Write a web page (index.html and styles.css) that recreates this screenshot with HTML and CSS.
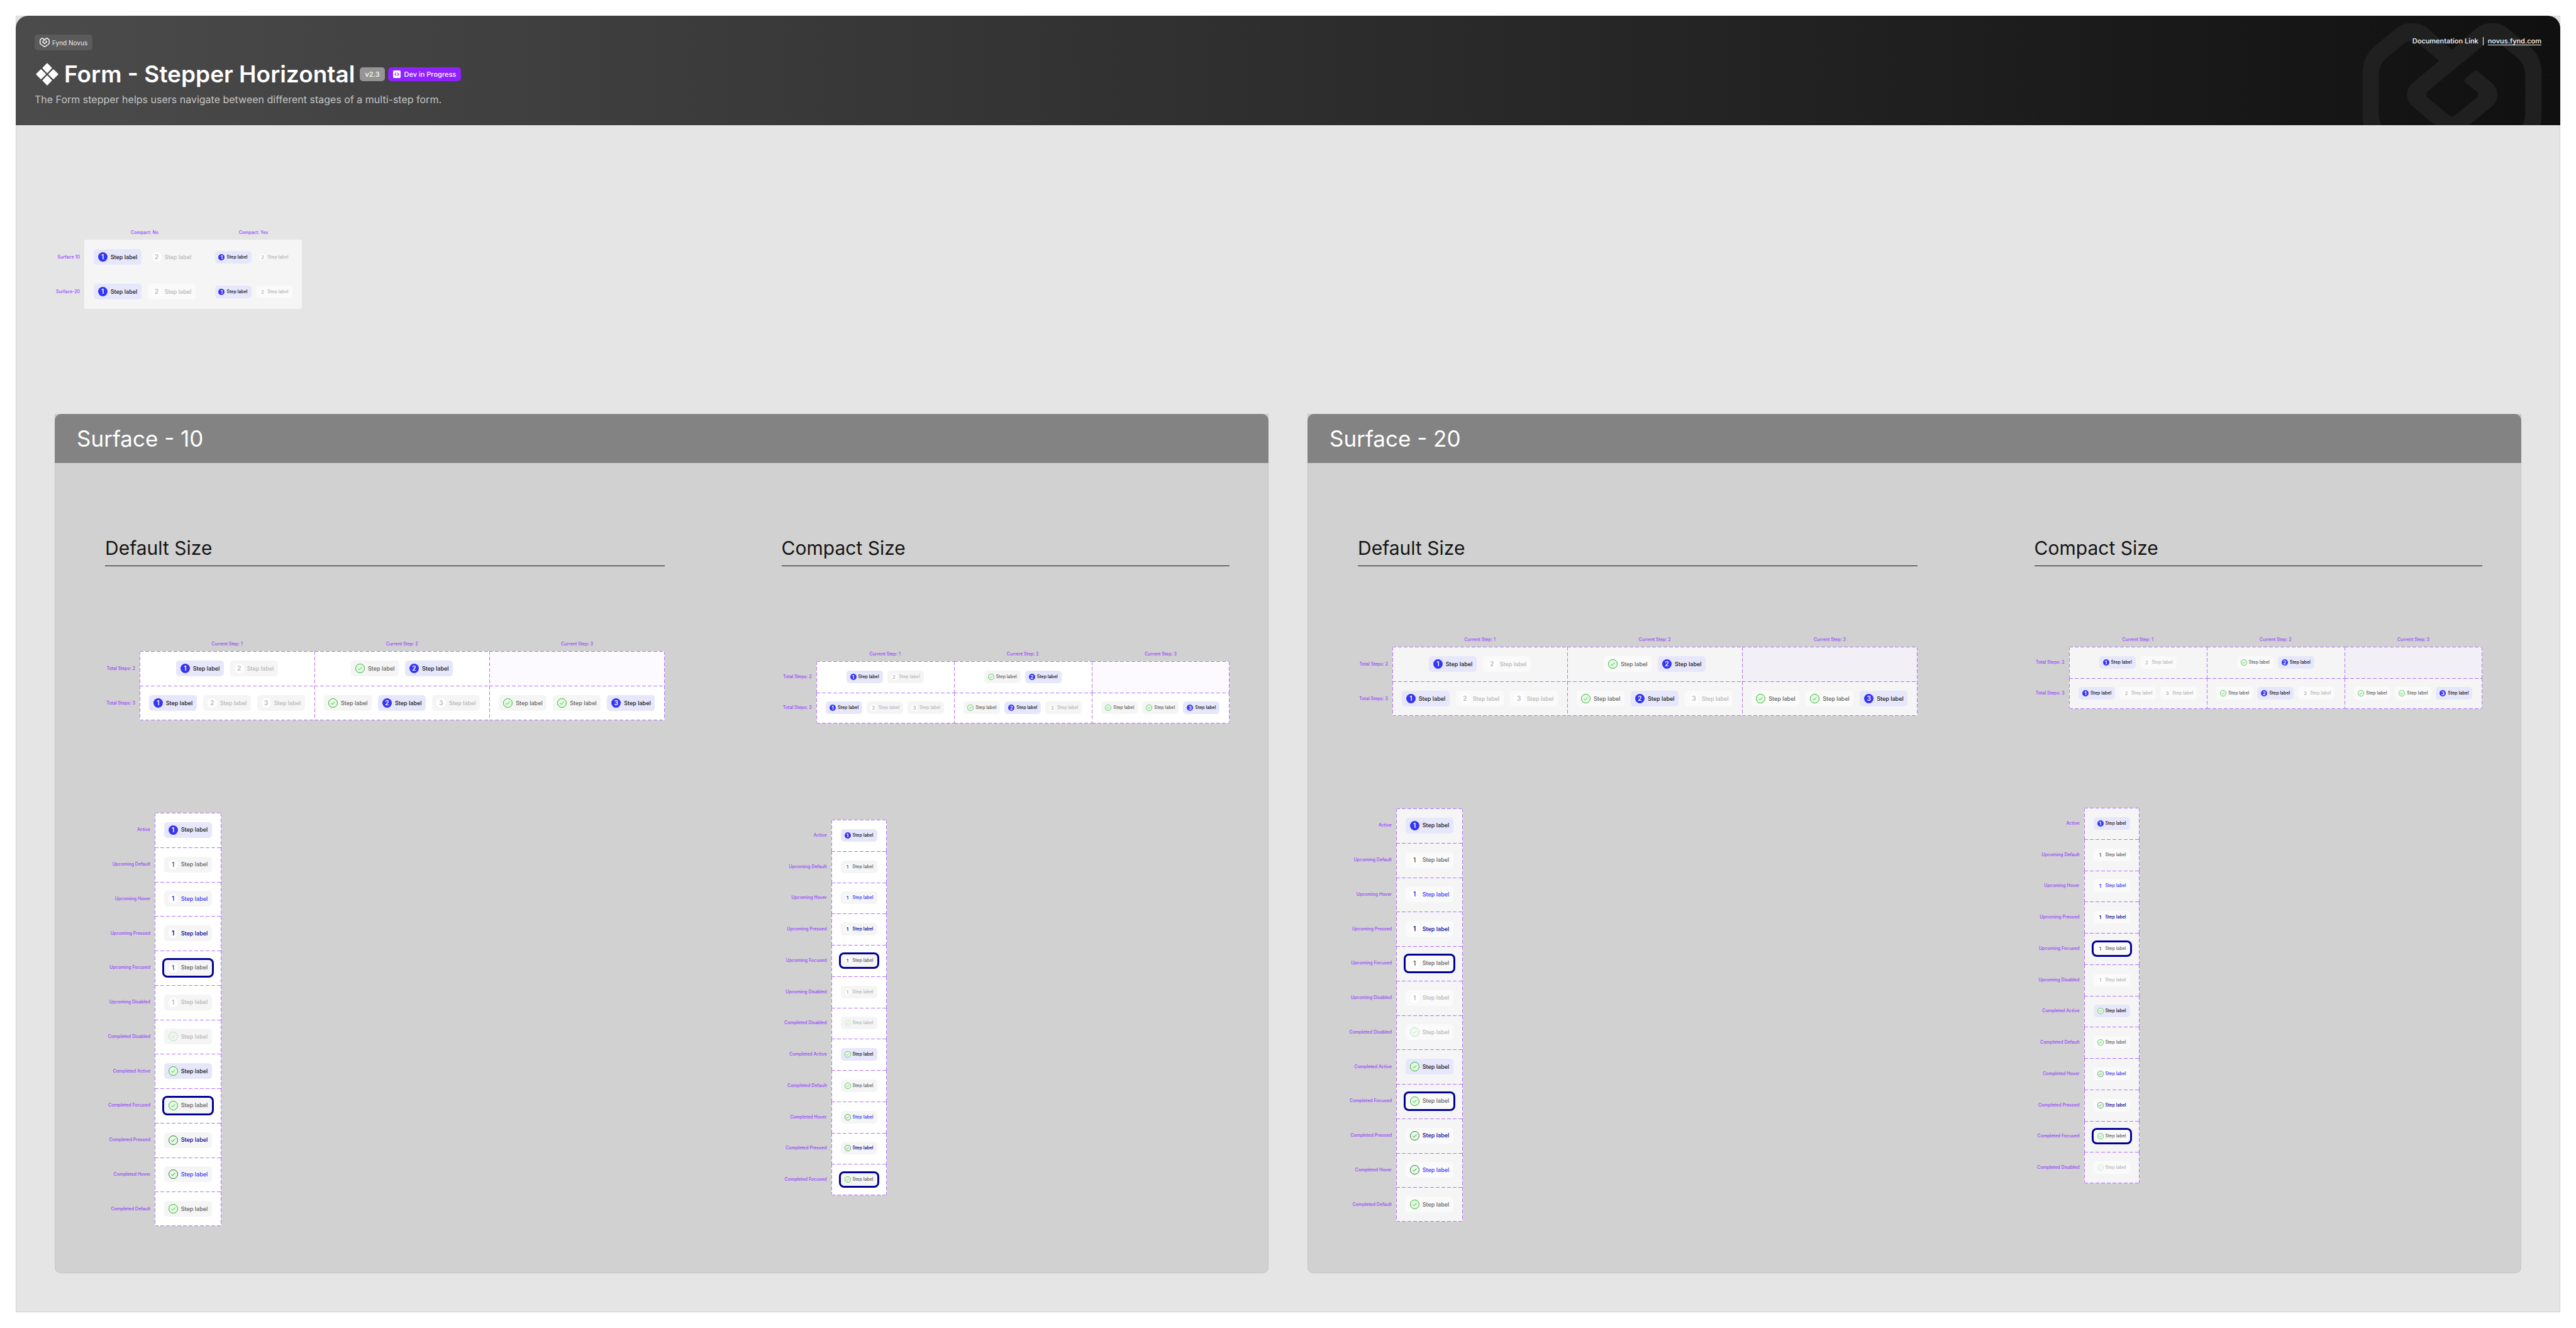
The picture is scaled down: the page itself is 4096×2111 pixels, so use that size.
FILE: index.html
```html
<!DOCTYPE html>
<html lang="en">
<head>
<meta charset="utf-8">
<title>Form - Stepper Horizontal</title>
<link rel="stylesheet" href="styles.css">
</head>
<body>
<svg class="defs" aria-hidden="true">
  <symbol id="novus" viewBox="0 0 460 430">
    <path fill-rule="evenodd" d="M1 126C1 96 14 75 33 58L88 12C110-5 145-5 167 12L230 68L293 12C315-5 350-5 371 12L427 58C446 75 459 96 459 126V231C459 275 445 292 421 312L251 421C238 431 222 431 209 421L39 312C15 292 1 275 1 231ZM42 136V231C42 258 52 274 70 287L217 382C226 388 234 388 243 382L390 287C408 274 417 258 417 231V136C417 114 410 98 394 86L354 54C338 43 324 45 311 56L167 175C163 179 163 186 167 190L224 237C228 240 232 240 236 237L293 190C297 186 297 179 293 175L263 151C260 148 260 144 263 142L287 122C290 119 292 119 294 122L333 154C350 168 350 197 333 212L250 281C237 291 223 291 210 281L128 212C110 197 110 168 128 154L197 96L144 52C134 43 118 43 107 52L68 84C50 97 42 114 42 136Z"/>
  </symbol>
  <symbol id="check" viewBox="0 0 24 24">
    <circle cx="12" cy="12" r="11.25" fill="#e4fbe5"/>
    <path d="M7 12.6l3 2.9 6.6-6.6" fill="none"/>
  </symbol>
</svg>
<div class="frame">
  <header class="masthead">
    <svg class="watermark" viewBox="0 0 460 261" preserveAspectRatio="none" aria-hidden="true">
      <path d="M3.500 261Q1 247 1 231V126C1 96 14 75 33 58L88 12C110-5 145-5 167 12L230 68L293 12C315-5 350-5 371 12L427 58C446 75 459 96 459 126V231Q459 247 456 261H410Q417 247 417 231V136C417 114 410 98 394 86L354 54C338 43 324 45 311 56L167 175C163 179 163 186 167 190L224 237C228 240 232 240 236 237L293 190C297 186 297 179 293 175L263 151C260 148 260 144 263 142L287 122C290 119 292 119 294 122L333 154C350 168 350 197 333 212L273 261H186L128 212C110 197 110 168 128 154L197 96L144 52C134 43 118 43 107 52L68 84C50 97 42 114 42 136V231Q42 247 50 261Z"/>
    </svg>
    <div class="masthead-main">
      <span class="brand"><svg class="brand-logo" aria-hidden="true"><use href="#novus"/></svg>Fynd Novus</span>
      <div class="title-row">
        <svg class="title-icon" viewBox="0 0 60 60" aria-hidden="true"><g stroke-linejoin="round" stroke-width="2"><path d="M30 3L41 14.500L30 26L19 14.500ZM30 34L41 45.500L30 57L19 45.500ZM14.500 18.500L26 30L14.500 41.500L3 30ZM45.500 18.500L57 30L45.500 41.500L34 30Z"/></g></svg>
        <h1>Form - Stepper Horizontal</h1>
        <div class="tags">
          <span class="tag">v2.3</span>
          <span class="tag tag-dev"><svg class="dev-icon" viewBox="0 0 20 20" aria-hidden="true"><rect width="20" height="20" rx="3" fill="#fff"/><path d="M8.500 6L5 10l3.500 4M11.500 6L15 10l-3.500 4" fill="none" stroke="#8f22ff" stroke-width="2"/></svg>Dev in Progress</span>
        </div>
      </div>
      <p class="subtitle">The Form stepper helps users navigate between different stages of a multi-step form.</p>
    </div>
    <div class="doc"><span>Documentation Link</span><span class="doc-line"></span><a href="#">novus.fynd.com</a></div>
  </header>
  <main>
    <div class="overview" data-overview></div>
    <div class="surfaces">
      <section class="surface s10">
        <h2>Surface - 10</h2>
        <div class="surface-body">
          <div class="size size-default"><h3>Default Size</h3><div data-matrix></div><div data-states="default-10"></div></div>
          <div class="size size-compact"><h3>Compact Size</h3><div data-matrix></div><div data-states="compact-10"></div></div>
        </div>
      </section>
      <section class="surface s20">
        <h2>Surface - 20</h2>
        <div class="surface-body">
          <div class="size size-default"><h3>Default Size</h3><div data-matrix></div><div data-states="default-20"></div></div>
          <div class="size size-compact"><h3>Compact Size</h3><div data-matrix></div><div data-states="compact-20"></div></div>
        </div>
      </section>
    </div>
  </main>
</div>
<script src="app.js"></script>
</body>
</html>
```
FILE: styles.css
```css
* { box-sizing: border-box; }
body { margin: 0; padding: 25px; background: #fff; font-family: Inter, "Liberation Sans", sans-serif; color: #141414; }
h1, h2, h3, p { margin: 0; }
.defs { position: absolute; width: 0; height: 0; }
.frame { display: flex; flex-direction: column; min-height: calc(100vh - 50px); background: #e5e5e5; box-shadow: inset 0 0 0 1px #d2d2d2; }

/* Masthead */
.masthead { position: relative; display: flex; justify-content: space-between; align-items: flex-start; height: 174px; padding: 30px; border-radius: 20px 20px 0 0; background: linear-gradient(90deg, #4b4b4b, #101010); color: #fff; overflow: hidden; }
.masthead-main { display: flex; flex-direction: column; align-items: flex-start; }
.brand { display: flex; align-items: center; gap: 4px; height: 25px; padding: 0 8px; border-radius: 5px; background: #5b5b5b; color: #ececec; font-size: 10px; }
.brand-logo { width: 16px; height: 15px; fill: #fff; }
.title-row { display: flex; align-items: center; gap: 8px; height: 44px; margin-top: 16px; }
.title-icon { width: 38px; height: 38px; margin-left: 1px; fill: #fff; stroke: #fff; }
h1 { font-size: 37px; line-height: 44px; font-weight: 600; white-space: nowrap; }
.tags { display: flex; gap: 5px; }
.tag { display: flex; align-items: center; gap: 6px; height: 22px; padding: 0 8px; border-radius: 5px; background: #959595; font-size: 11px; font-weight: 500; white-space: nowrap; }
.tag-dev { background: #8f22ff; }
.dev-icon { width: 12px; height: 12px; }
.subtitle { margin-top: 6px; font-size: 16px; line-height: 24px; color: #c4c4c4; }
.doc { position: relative; display: flex; align-items: center; gap: 7px; height: 20px; font-size: 11px; font-weight: 500; }
.doc-line { width: 1px; height: 13px; background: #fff; }
.doc a { color: #fff; text-underline-offset: 2px; }
.watermark { position: absolute; top: 12px; right: 29px; width: 286px; height: 162px; fill: #202020; }

main { display: flex; flex-direction: column; flex: 1; padding: 166px 62px 62px; }
.surfaces { display: grid; grid-template-columns: 1fr 1fr; gap: 62px; flex: 1; margin-top: 167px; }
.surface { background: #d1d1d1; border-radius: 0 0 10px 10px; box-shadow: inset 0 0 0 1px #c4c4c4; }
h2 { height: 78px; padding: 0 35px; border-radius: 10px 10px 0 0; background: #838383; color: #fff; font-size: 35px; line-height: 78px; font-weight: 400; }
.surface-body { display: grid; grid-template-columns: 889fr 712fr; gap: 186px; padding: 117px 62px 60px 80px; }
h3 { padding-bottom: 10px; border-bottom: 1px solid #141414; font-size: 30px; line-height: 36px; font-weight: 400; }

/* Specimen tables */
table { border-spacing: 0; table-layout: fixed; }
th { padding: 0; font-size: 7px; line-height: 10px; font-weight: 500; color: #9747ff; white-space: nowrap; }
thead th { height: 16px; vertical-align: top; }
tbody th { padding-right: 7px; text-align: right; }
td { padding: 0; }
.row { display: flex; justify-content: center; gap: 10px; }
.compact .row { gap: 7px; }
.matrix { width: 100%; }
.matrix .label-col { width: 55px; }
.states .label-col { width: 79px; }
.states .step-col { width: 106px; }
.states.compact .step-col { width: 88px; }
.matrix tbody { height: 110px; }
.matrix.compact tbody { height: 99px; }
.states tbody { height: 657px; }
.states.compact tbody { height: 597px; }

tbody td {
  --h: repeating-linear-gradient(90deg, #b274ff 0 6px, transparent 6px 9px);
  --v: repeating-linear-gradient(180deg, #b274ff 0 6px, transparent 6px 9px);
}
.matrix tbody td, .states td {
  background-color: var(--paper);
  background-image: var(--h), var(--v), var(--h), var(--v);
  background-position: 0 0, 0 0, 0 100%, 100% 0;
  background-size: 100% 1px, 1px 100%, 0 0, 0 0;
  background-repeat: no-repeat;
}
.matrix tbody td:last-child { background-size: 100% 1px, 1px 100%, 0 0, 1px 100%; }
.matrix tbody tr:last-child td { background-size: 100% 1px, 1px 100%, 100% 1px, 0 0; }
.matrix tbody tr:last-child td:last-child, .states tr:last-child td { background-size: 100% 1px, 1px 100%, 100% 1px, 1px 100%; }
.states tr:not(:last-child) td { background-size: 100% 1px, 1px 100%, 0 0, 1px 100%; }
.matrix tbody td.empty { background-color: var(--empty); }
tbody tr:first-child td:nth-child(2) { border-top-left-radius: 3px; }
tbody tr:first-child td:last-child { border-top-right-radius: 3px; }
tbody tr:last-child td:nth-child(2) { border-bottom-left-radius: 3px; }
tbody tr:last-child td:last-child { border-bottom-right-radius: 3px; }

.s10 { --paper: #fff; --empty: #fcfaff; --step: #f5f5f5; }
.s20 { --paper: #f5f5f5; --empty: #f2eff6; --step: #fafafa; }
.s10 .size-default .matrix { margin-top: 119px; }
.s10 .size-compact .matrix { margin-top: 135px; }
.s20 .matrix { margin-top: 112px; }
.states { margin-top: 147px; }
.s10 .states.compact { margin-top: 153px; }
.s20 .states.compact { margin-top: 157px; }
.s20 .size-default .states { margin-left: -18px; }

/* Overview */
.overview-table .label-col { width: 47px; }
.overview-table .default-col { width: 192px; }
.overview-table .compact-col { width: 154px; }
.overview-table tbody tr { height: 55px; }
.overview-table td { background: #f5f5f5; }

/* Step */
.step { display: flex; align-items: center; justify-content: center; gap: 5px; width: 76px; height: 25px; padding: 0; border: 0; border-radius: 5px; background: var(--step); color: #5f5f5f; font: 500 9px/12px Inter, "Liberation Sans", sans-serif; white-space: nowrap; }
.marker { width: 15px; height: 15px; border-radius: 50%; background: #fff; font-size: 10px; line-height: 15px; font-weight: 600; text-align: center; }
.check { width: 15px; height: 15px; overflow: visible; stroke: #25ab21; stroke-width: 1.5; }
.compact .step { gap: 3px; width: 58px; height: 20px; font-size: 7px; line-height: 10px; }
.compact .marker { width: 10px; height: 10px; font-size: 8px; line-height: 10px; }
.compact .check { width: 10px; height: 10px; }
.step.active { background: #e7e7fb; color: #141414; }
.step.active .marker { background: #3535f3; color: #fff; }
.step.hover { color: #3535f3; }
.step.pressed { color: #000093; }
.step.hover .check, .step.pressed .check { stroke: #1f6a2c; }
.step.focused { box-shadow: 0 0 0 3px #000093; }
.step:disabled { color: #b5b5b5; }
.step:disabled .check { opacity: .3; }
```
FILE: app.js
```js
const step = (mark, state = '') => {
  const icon = mark === 'check'
    ? '<svg class="check" aria-hidden="true"><use href="#check"/></svg>'
    : `<span class="marker">${mark}</span>`;
  const off = state === 'disabled' ? ' disabled' : '';
  return `<button type="button" class="step ${state}"${off}>${icon}<span>Step label</span></button>`;
};

// A stepper of `total` steps with `current` being the active one.
const stepper = (total, current) => {
  let html = '';
  for (let i = 1; i <= total; i++) {
    html += i < current ? step('check') : step(i, i === current ? 'active' : 'disabled');
  }
  return `<div class="row">${html}</div>`;
};

const matrix = (size) => {
  const cell = (t, c) => c > t ? '<td class="empty"></td>' : `<td>${stepper(t, c)}</td>`;
  return `<table class="matrix ${size}"><colgroup><col class="label-col"><col><col><col></colgroup>
    <thead><tr><td></td>${[1, 2, 3].map(c => `<th scope="col">Current Step: ${c}</th>`).join('')}</tr></thead>
    <tbody>${[2, 3].map(t => `<tr><th scope="row">Total Steps: ${t}</th>${[1, 2, 3].map(c => cell(t, c)).join('')}</tr>`).join('')}</tbody></table>`;
};

const upcoming = ['Active', 'Upcoming Default', 'Upcoming Hover', 'Upcoming Pressed', 'Upcoming Focused', 'Upcoming Disabled'];
const completed = {
  default: ['Disabled', 'Active', 'Focused', 'Pressed', 'Hover', 'Default'],
  'compact-10': ['Disabled', 'Active', 'Default', 'Hover', 'Pressed', 'Focused'],
  'compact-20': ['Active', 'Default', 'Hover', 'Pressed', 'Focused', 'Disabled']
};

const states = (key) => {
  const size = key.split('-')[0];
  const rows = upcoming.concat((completed[key] || completed.default).map(s => `Completed ${s}`));
  const row = (name) => {
    const mark = name.startsWith('Completed') ? 'check' : 1;
    const state = name.split(' ').pop().toLowerCase();
    return `<tr><th scope="row">${name}</th><td><div class="row">${step(mark, state)}</div></td></tr>`;
  };
  return `<table class="states ${size}"><colgroup><col class="label-col"><col class="step-col"></colgroup><tbody>${rows.map(row).join('')}</tbody></table>`;
};

const overview = () => {
  const row = (name, cls) => `<tr class="${cls}"><th scope="row">${name}</th><td>${stepper(2, 1)}</td><td class="compact">${stepper(2, 1)}</td></tr>`;
  return `<table class="overview-table"><colgroup><col class="label-col"><col class="default-col"><col class="compact-col"></colgroup>
    <thead><tr><th></th><th scope="col">Compact: No</th><th scope="col">Compact: Yes</th></tr></thead>
    <tbody>${row('Surface 10', 's10')}${row('Surface-20', 's20')}</tbody></table>`;
};

document.querySelector('[data-overview]').innerHTML = overview();
document.querySelectorAll('[data-matrix]').forEach(el => {
  el.innerHTML = matrix(el.parentElement.classList.contains('size-compact') ? 'compact' : 'default');
});
document.querySelectorAll('[data-states]').forEach(el => { el.innerHTML = states(el.dataset.states); });
```
